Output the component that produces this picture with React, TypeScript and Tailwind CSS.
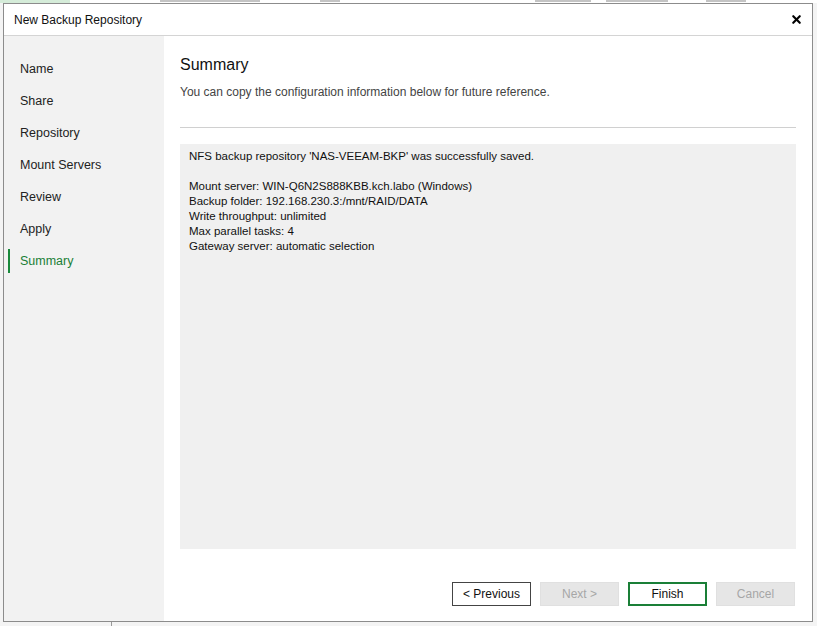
import { X } from "lucide-react";

const steps = ["Name", "Share", "Repository", "Mount Servers", "Review", "Apply", "Summary"];

const details = [
  "Mount server: WIN-Q6N2S888KBB.kch.labo (Windows)",
  "Backup folder: 192.168.230.3:/mnt/RAID/DATA",
  "Write throughput: unlimited",
  "Max parallel tasks: 4",
  "Gateway server: automatic selection",
];

// bits of the window behind the dialog (only the bottom pixel row of its text shows)
const behind = [
  { left: 90, w: 100 },
  { left: 60, w: 20 },
  { left: 195, w: 56 },
  { left: 15, w: 62 },
  { left: 38, w: 40 },
];

function StepItem({ label, active }: { label: string; active: boolean }) {
  return (
    <div className="flex h-[24px] items-center">
      <div className={`h-[24px] w-[2px] ${active ? "bg-[#1a8a3c]" : ""}`} />
      <span className={`ml-[10px] text-[12.5px] ${active ? "text-[#1a7f37]" : "text-[#222]"}`}>{label}</span>
    </div>
  );
}

export default function App() {
  return (
    <div
      className="flex h-[626px] w-[817px] flex-col overflow-hidden bg-[#f4f4f4]"
      style={{ fontFamily: '"Liberation Sans", Arial, sans-serif' }}
    >
      {/* window behind the dialog */}
      <div className="flex h-[3px] shrink-0 items-start bg-white">
        <div className="h-[3px] w-[70px] bg-[#d5ecd9]" />
        {behind.map((b, i) => (
          <div key={i} className="h-[2px] bg-[#c4c4c4]" style={{ marginLeft: b.left, width: b.w }} />
        ))}
      </div>

      <div className="ml-[3px] flex h-[619px] w-[810px] flex-col border border-[#8c8c8c] bg-white">
        <div className="flex h-[32px] shrink-0 items-center justify-between border-b border-[#d4d4d4] pl-[10px] pr-[9px]">
          <span className="text-[12px] text-[#111]">New Backup Repository</span>
          <X className="h-[13px] w-[13px] text-black" strokeWidth={4} />
        </div>

        <div className="flex min-h-0 flex-1">
          <div className="flex w-[160px] shrink-0 flex-col gap-[8px] bg-[#f2f2f2] pl-[4px] pt-[21px]">
            {steps.map((s) => (
              <StepItem key={s} label={s} active={s === "Summary"} />
            ))}
          </div>

          <div className="flex flex-1 flex-col px-[16px]">
            <div className="pt-[17px] text-[16px] text-[#111]">Summary</div>
            <div className="mt-[6px] text-[12px] text-[#444]">
              You can copy the configuration information below for future reference.
            </div>
            <div className="mt-[26px] h-px bg-[#d0d0d0]" />
            <div className="mt-[16px] flex h-[405px] flex-col bg-[#f0f0f0] px-[9px] pt-[5px] text-[11.5px] leading-[15px] text-[#111]">
              <div>NFS backup repository 'NAS-VEEAM-BKP' was successfully saved.</div>
              <div className="mt-[15px]">
                {details.map((d) => (
                  <div key={d}>{d}</div>
                ))}
              </div>
            </div>

            <div className="mt-[33px] flex justify-end gap-[9px] pr-[1px] text-[12px]">
              <button className="h-[24px] w-[79px] border border-[#444] bg-white text-[#111]">&lt; Previous</button>
              <button className="h-[24px] w-[79px] border border-[#e0e0e0] bg-[#e6e6e6] text-[#a6a6a6]">Next &gt;</button>
              <button className="h-[24px] w-[79px] border-2 border-[#1a7f37] bg-white text-[#111]">Finish</button>
              <button className="h-[24px] w-[79px] border border-[#e0e0e0] bg-[#e6e6e6] text-[#a6a6a6]">Cancel</button>
            </div>
          </div>
        </div>
      </div>

      <div className="flex h-[4px] shrink-0">
        <div className="ml-[111px] w-px bg-[#999]" />
      </div>
    </div>
  );
}
